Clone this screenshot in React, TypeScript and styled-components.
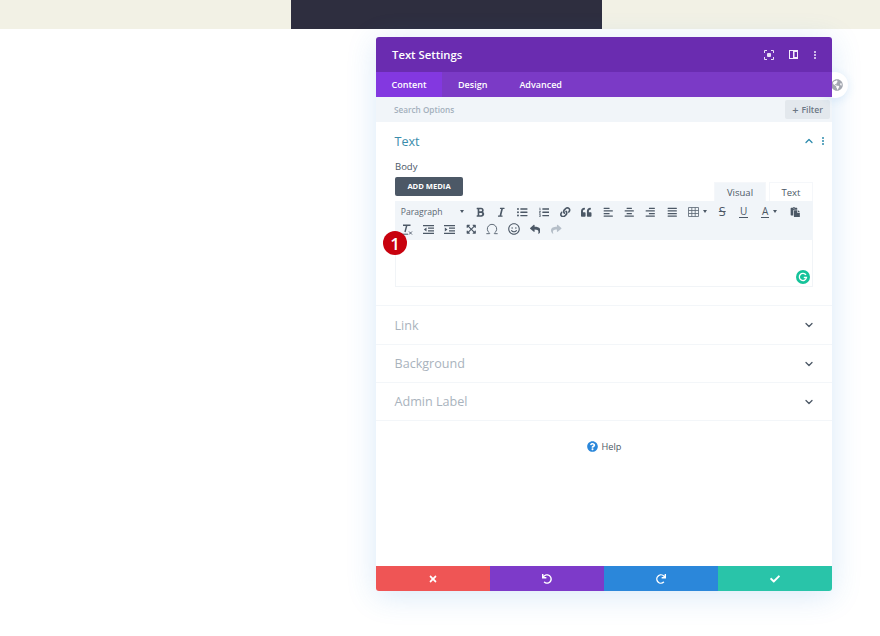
import { createGlobalStyle, styled } from "styled-components";
import type { ReactNode } from "react";
import {
  FaAlignCenter,
  FaAlignJustify,
  FaAlignLeft,
  FaAlignRight,
  FaBold,
  FaCheck,
  FaExpandArrowsAlt,
  FaGlobeAmericas,
  FaItalic,
  FaLink,
  FaListOl,
  FaListUl,
  FaPaste,
  FaQuoteLeft,
  FaQuestionCircle,
  FaRedo,
  FaRegSmile,
  FaReply,
  FaShare,
  FaTimes,
  FaUndo,
} from "react-icons/fa";
import { ChevronDown, ChevronUp, Omega } from "lucide-react";

const GlobalStyle = createGlobalStyle`
  html, body {
    margin: 0;
    background: #fff;
    font-family: "Open Sans", "Liberation Sans", sans-serif;
  }
`;

const Page = styled.div`
  width: 880px;
  height: 636px;
  overflow: hidden;
  display: flex;
  flex-direction: column;
`;

const TopBand = styled.div`
  height: 29px;
  flex: none;
  display: grid;
  grid-template-columns: 291px 311px 1fr;
  background: #f2f1e5;
`;

const DarkBlock = styled.div`
  background: #2e2e3f;
`;

const Stage = styled.div`
  padding: 8px 0 0 376px;
`;

const Panel = styled.div`
  position: relative;
  width: 456px;
  height: 554px;
  display: flex;
  flex-direction: column;
  border-radius: 3px;
  background: #fff;
  box-shadow: 0 5px 30px rgba(43, 135, 218, 0.18);
`;

const GlobeButton = styled.div`
  position: absolute;
  top: 35px;
  right: -16px;
  width: 26px;
  height: 26px;
  box-sizing: border-box;
  padding-left: 4px;
  border-radius: 50%;
  background: #fff;
  color: #a3a7b0;
  display: flex;
  align-items: center;
  justify-content: center;
  font-size: 12px;
  box-shadow: 0 2px 10px rgba(43, 135, 218, 0.14);
`;

const Header = styled.div`
  position: relative;
  height: 35px;
  flex: none;
  display: flex;
  align-items: center;
  padding: 0 15px 0 16px;
  background: #6a2cb0;
  border-radius: 3px 3px 0 0;
  color: #fff;
`;

const Title = styled.div`
  flex: 1;
  font-size: 11.3px;
  font-weight: 600;
`;

const HeaderIcons = styled.div`
  display: flex;
  align-items: center;
  gap: 15px;
`;

const TabBar = styled.div`
  position: relative;
  height: 25px;
  flex: none;
  display: flex;
  background: #7b3ac6;
`;

const Tab = styled.div<{ $active?: boolean }>`
  width: ${(p) => (p.$active ? "66px" : "auto")};
  padding: ${(p) => (p.$active ? "0" : "0 16px")};
  display: flex;
  align-items: center;
  justify-content: center;
  font-size: 9px;
  font-weight: 600;
  color: #fff;
  background: ${(p) => (p.$active ? "#8338e0" : "transparent")};
`;

const SearchBar = styled.div`
  height: 25px;
  flex: none;
  display: flex;
  align-items: center;
  justify-content: space-between;
  padding: 0 2px 0 18px;
  background: #f1f5f9;
`;

const SearchLabel = styled.div`
  font-size: 8.2px;
  font-weight: 600;
  color: #a3b0bc;
`;

const FilterButton = styled.div`
  width: 45px;
  height: 19px;
  display: flex;
  align-items: center;
  justify-content: center;
  gap: 3px;
  font-size: 8.6px;
  font-weight: 600;
  color: #6b7784;
  background: #e3e8ed;
  border-radius: 2px;
`;

const FilterPlus = styled.span`
  font-size: 11px;
  line-height: 1;
`;

const Body = styled.div`
  flex: 1;
  display: flex;
  flex-direction: column;
`;

const TextSection = styled.div`
  height: 184px;
  flex: none;
  border-bottom: 1px solid #f3f6f9;
  box-sizing: border-box;
`;

const SectionHead = styled.div`
  height: 38px;
  display: flex;
  align-items: center;
  gap: 6px;
  padding: 0 7px 0 18.5px;
  color: #2e8bad;
`;

const SectionTitle = styled.div<{ $open?: boolean }>`
  flex: 1;
  font-size: 12.6px;
  color: ${(p) => (p.$open ? "#3a8dac" : "#a9b3bd")};
`;

const Dots = styled.div`
  display: flex;
  flex-direction: column;
  gap: 1px;
  width: 4px;
  align-items: center;
`;

const Dot = styled.span<{ $color: string }>`
  width: 2px;
  height: 2px;
  border-radius: 50%;
  background: ${(p) => p.$color};
`;

const FieldBlock = styled.div`
  padding: 0 19px;
`;

const FieldLabel = styled.div`
  height: 14px;
  line-height: 14px;
  font-size: 9.5px;
  font-weight: 500;
  color: #4c5866;
`;

const EditorTop = styled.div`
  height: 24px;
  margin-top: 3px;
  display: flex;
  justify-content: space-between;
  align-items: flex-end;
`;

const MediaButton = styled.div`
  align-self: flex-start;
  width: 68px;
  height: 19px;
  padding-bottom: 1px;
  box-sizing: border-box;
  display: flex;
  align-items: center;
  justify-content: center;
  font-size: 7.6px;
  font-weight: 700;
  color: #fff;
  background: #4c5866;
  border-radius: 2px;
`;

const ModeTabs = styled.div`
  display: flex;
  gap: 3px;
`;

const ModeTab = styled.div<{ $width: number; $filled?: boolean }>`
  width: ${(p) => p.$width}px;
  height: 19px;
  display: flex;
  align-items: center;
  justify-content: center;
  font-size: 9.5px;
  font-weight: 500;
  color: #4c5866;
  background: ${(p) => (p.$filled ? "#f1f5f9" : "#fff")};
  border: 1px solid #f5f7fa;
  border-bottom: 0;
  box-sizing: border-box;
`;

const Toolbar = styled.div`
  height: 39px;
  box-sizing: border-box;
  padding: 2px 1.3px 0;
  background: #f1f5f9;
`;

const ToolRow = styled.div`
  height: 17.5px;
  display: flex;
  align-items: center;
`;

const ParagraphSelect = styled.div`
  width: 73px;
  padding: 0 5px 0 4.5px;
  box-sizing: border-box;
  display: flex;
  align-items: center;
  justify-content: space-between;
  font-size: 8.6px;
  font-weight: 500;
  color: #5a6672;
`;

const Caret = styled.span`
  width: 0;
  height: 0;
  border-left: 2.5px solid transparent;
  border-right: 2.5px solid transparent;
  border-top: 3px solid #4c5866;
`;

const Tool = styled.div<{ $width?: number; $faded?: boolean }>`
  width: ${(p) => p.$width ?? 21.33}px;
  flex: none;
  display: flex;
  align-items: center;
  justify-content: center;
  gap: 4px;
  font-size: 10.5px;
  color: ${(p) => (p.$faded ? "#b6bfc9" : "#4c5866")};
`;

const UnderlinedLetter = styled.span<{ $heavy?: boolean }>`
  display: block;
  line-height: 10px;
  padding: 0 1px 1px;
  font-size: 10px;
  font-weight: ${(p) => (p.$heavy ? 500 : 400)};
  color: #4c5866;
  border-bottom: 1px solid #4c5866;
`;

const StruckLetter = styled.span`
  font-size: 12.5px;
  line-height: 12px;
  padding: 0 1px;
  color: #4c5866;
  text-decoration: line-through;
`;

const EditorArea = styled.div`
  position: relative;
  height: 47px;
  box-sizing: border-box;
  border: 1px solid #f1f4f7;
  border-top: 0;
`;

const Grammarly = styled.div`
  position: absolute;
  right: 2px;
  bottom: 2px;
  width: 14px;
  height: 14px;
  display: flex;
`;

const MarkerBadge = styled.div`
  position: absolute;
  top: 194px;
  left: 7px;
  width: 24px;
  height: 24px;
  border-radius: 50%;
  display: flex;
  align-items: center;
  justify-content: center;
  background: #c8020e;
  color: #fff;
  font-size: 17px;
  font-weight: 600;
`;

const CollapsedRow = styled.div<{ $height: number }>`
  height: ${(p) => p.$height}px;
  flex: none;
  box-sizing: border-box;
  display: flex;
  align-items: center;
  padding: 0 17px 0 18.5px;
  border-bottom: 1px solid #f3f6f9;
  color: #4c5866;
`;

const HelpRow = styled.div`
  height: 50px;
  display: flex;
  align-items: center;
  justify-content: center;
  gap: 4px;
  font-size: 9.2px;
  font-weight: 500;
  color: #4c5866;
`;

const HelpIcon = styled.span`
  display: flex;
  color: #2b87da;
  font-size: 11px;
`;

const Footer = styled.div`
  height: 25px;
  flex: none;
  display: grid;
  grid-template-columns: repeat(4, 1fr);
  border-radius: 0 0 3px 3px;
  overflow: hidden;
`;

const FooterButton = styled.div<{ $color: string }>`
  display: flex;
  align-items: center;
  justify-content: center;
  color: #fff;
  font-size: 10px;
  background: ${(p) => p.$color};
`;

function DotsIcon({ color }: { color: string }) {
  return (
    <Dots>
      <Dot $color={color} />
      <Dot $color={color} />
      <Dot $color={color} />
    </Dots>
  );
}

function FocusIcon() {
  return (
    <svg width="10" height="10" viewBox="0 0 10 10" fill="none" stroke="#e9def7" strokeWidth="1">
      <path d="M0.5 3V0.5H3M7 0.5H9.5V3M9.5 7V9.5H7M3 9.5H0.5V7" />
      <rect x="3" y="3" width="4" height="4" rx="1" fill="#e9def7" stroke="none" />
    </svg>
  );
}

function SplitIcon() {
  return (
    <svg width="9" height="9" viewBox="0 0 9 9">
      <path fillRule="evenodd" fill="#f3edfb" d="M0 0H9V9H0ZM1 1V8H4V1ZM5.5 2V7H8V2Z" />
    </svg>
  );
}

function TableIcon() {
  return (
    <svg width="11" height="10" viewBox="0 0 11 10" fill="none" stroke="#5a6672" strokeWidth="0.8">
      <path d="M0.5 0.5H10.5V9.5H0.5ZM0.5 3.5H10.5M0.5 6.5H10.5M3.8 0.5V9.5M7.2 0.5V9.5" />
    </svg>
  );
}

function ClearFormat() {
  return (
    <svg width="12" height="11" viewBox="0 0 12 11" fill="none" stroke="#4c5866">
      <path d="M2 1.2H9.5M5.8 1.2L4 8" strokeWidth="1.4" />
      <path d="M0.5 10.2H7" strokeWidth="1" />
      <path d="M8 7.5L11 10.5M11 7.5L8 10.5" strokeWidth="0.9" />
    </svg>
  );
}

function IndentIcon({ flip }: { flip?: boolean }) {
  return (
    <svg width="11" height="9" viewBox="0 0 11 9" fill="#4c5866">
      <path d="M0 0H11V1.2H0ZM5 2.6H11V3.8H5ZM5 5.2H11V6.4H5ZM0 7.8H11V9H0Z" />
      <path d={flip ? "M3.5 2.5V6.5L0.8 4.5Z" : "M0.8 2.5V6.5L3.5 4.5Z"} />
    </svg>
  );
}

function GrammarlyIcon() {
  return (
    <svg width="14" height="14" viewBox="0 0 14 14">
      <circle cx="7" cy="7" r="7" fill="#15c39a" />
      <path d="M10 5A3.6 3.6 0 1 0 10.5 7.5H7.8" fill="none" stroke="#fff" strokeWidth="1.3" />
    </svg>
  );
}

function Collapsed({ height, children }: { height: number; children: ReactNode }) {
  return (
    <CollapsedRow $height={height}>
      <SectionTitle>{children}</SectionTitle>
      <ChevronDown size={12} strokeWidth={2.6} />
    </CollapsedRow>
  );
}

export default function App() {
  return (
    <Page>
      <GlobalStyle />
      <TopBand>
        <div />
        <DarkBlock />
        <div />
      </TopBand>
      <Stage>
        <Panel>
          <GlobeButton>
            <FaGlobeAmericas />
          </GlobeButton>
          <Header>
            <Title>Text Settings</Title>
            <HeaderIcons>
              <FocusIcon />
              <SplitIcon />
              <DotsIcon color="#efe6fa" />
            </HeaderIcons>
          </Header>
          <TabBar>
            <Tab $active>Content</Tab>
            <Tab>Design</Tab>
            <Tab>Advanced</Tab>
          </TabBar>
          <SearchBar>
            <SearchLabel>Search Options</SearchLabel>
            <FilterButton>
              <FilterPlus>+</FilterPlus>
              Filter
            </FilterButton>
          </SearchBar>
          <Body>
            <TextSection>
              <SectionHead>
                <SectionTitle $open>Text</SectionTitle>
                <ChevronUp size={12} strokeWidth={2.6} />
                <DotsIcon color="#2e8bad" />
              </SectionHead>
              <FieldBlock>
                <FieldLabel>Body</FieldLabel>
                <EditorTop>
                  <MediaButton>ADD MEDIA</MediaButton>
                  <ModeTabs>
                    <ModeTab $width={52} $filled>
                      Visual
                    </ModeTab>
                    <ModeTab $width={44}>Text</ModeTab>
                  </ModeTabs>
                </EditorTop>
                <Toolbar>
                  <ToolRow>
                    <ParagraphSelect>
                      Paragraph
                      <Caret />
                    </ParagraphSelect>
                    <Tool><FaBold /></Tool>
                    <Tool><FaItalic /></Tool>
                    <Tool><FaListUl /></Tool>
                    <Tool><FaListOl /></Tool>
                    <Tool><FaLink /></Tool>
                    <Tool><FaQuoteLeft /></Tool>
                    <Tool><FaAlignLeft /></Tool>
                    <Tool><FaAlignCenter /></Tool>
                    <Tool><FaAlignRight /></Tool>
                    <Tool><FaAlignJustify /></Tool>
                    <Tool $width={29}><TableIcon /><Caret /></Tool>
                    <Tool><StruckLetter>S</StruckLetter></Tool>
                    <Tool><UnderlinedLetter>U</UnderlinedLetter></Tool>
                    <Tool $width={30}>
                      <UnderlinedLetter $heavy>A</UnderlinedLetter>
                      <Caret />
                    </Tool>
                    <Tool><FaPaste /></Tool>
                  </ToolRow>
                  <ToolRow>
                    <Tool><ClearFormat /></Tool>
                    <Tool><IndentIcon flip /></Tool>
                    <Tool><IndentIcon /></Tool>
                    <Tool><FaExpandArrowsAlt /></Tool>
                    <Tool><Omega size={14} strokeWidth={1.5} /></Tool>
                    <Tool><FaRegSmile size={12} /></Tool>
                    <Tool><FaReply /></Tool>
                    <Tool $faded><FaShare /></Tool>
                  </ToolRow>
                </Toolbar>
                <EditorArea>
                  <Grammarly>
                    <GrammarlyIcon />
                  </Grammarly>
                </EditorArea>
              </FieldBlock>
            </TextSection>
            <Collapsed height={39}>Link</Collapsed>
            <Collapsed height={38}>Background</Collapsed>
            <Collapsed height={38}>Admin Label</Collapsed>
            <HelpRow>
              <HelpIcon><FaQuestionCircle /></HelpIcon>
              Help
            </HelpRow>
          </Body>
          <Footer>
            <FooterButton $color="#ef5555"><FaTimes /></FooterButton>
            <FooterButton $color="#7d3ac9"><FaUndo /></FooterButton>
            <FooterButton $color="#2b87da"><FaRedo /></FooterButton>
            <FooterButton $color="#29c4a9"><FaCheck /></FooterButton>
          </Footer>
          <MarkerBadge>1</MarkerBadge>
        </Panel>
      </Stage>
    </Page>
  );
}
